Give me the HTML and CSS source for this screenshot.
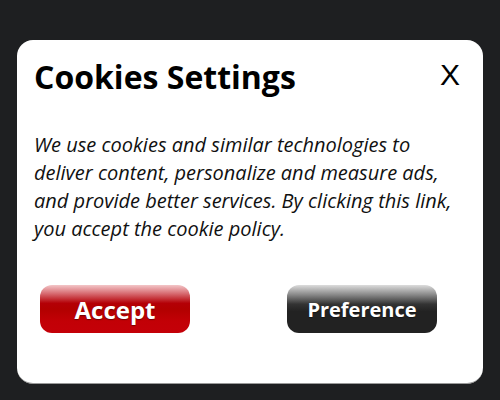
FILE: index.html
```html
<!DOCTYPE html>
<html>
<head>
<meta charset="utf-8">
<link rel="stylesheet" href="styles.css">
</head>
<body>
<div class="card">
  <div class="header">
    <h1 class="title">Cookies Settings</h1>
    <span class="close">X</span>
  </div>
  <p class="text">We use cookies and similar technologies to deliver content, personalize and measure ads, and provide better services. By clicking this link, you accept the cookie policy.</p>
  <div class="actions">
    <button class="btn btn-accept">Accept</button>
    <button class="btn btn-pref">Preference</button>
  </div>
</div>
</body>
</html>
```
FILE: styles.css
```css
html, body {
  margin: 0;
  padding: 0;
  background: #1e1f21;
  width: 500px;
  height: 400px;
  overflow: hidden;
  font-family: "Open Sans", "DejaVu Sans", sans-serif;
}
.card {
  margin: 40px 17px 0 17px;
  height: 344px;
  box-sizing: border-box;
  background: #fff;
  border-radius: 16px;
  border-bottom: 1px solid #9a9a9a;
  padding: 13px 23px 0 17px;
}
.header {
  display: flex;
  justify-content: space-between;
  align-items: center;
}
.title {
  margin: 0;
  font-size: 32px;
  font-weight: 700;
  color: #000;
  line-height: 48px;
}
.close {
  font-family: "Liberation Sans", Arial, sans-serif;
  font-size: 30px;
  color: #000;
  line-height: 48px;
  margin-top: -4px;
  margin-right: 0;
}
.text {
  margin: 30px 0 0 0;
  font-size: 20px;
  font-style: italic;
  line-height: 28px;
  color: #111;
}
.actions {
  display: flex;
  justify-content: space-between;
  padding: 0 23px 0 6px;
  margin-top: 42px;
}
.btn {
  width: 150px;
  height: 48px;
  border-radius: 12px;
  border: none;
  color: #fff;
  font-family: "Open Sans", "DejaVu Sans", sans-serif;
  font-weight: 700;
  padding: 0;
  text-shadow: 0 1px 1px rgba(0,0,0,0.4);
}
.btn-accept {
  font-size: 24px;
  background: linear-gradient(to bottom, #f3c6c8 0%, #d76a70 18%, #b40006 38%, #b20000 50%, #c20006 75%, #c40008 100%);
}
.btn-pref {
  font-size: 20px;
  background: linear-gradient(to bottom, #dcdcdc 0%, #8a8a8a 20%, #333 40%, #222 55%, #222 100%);
}
```
